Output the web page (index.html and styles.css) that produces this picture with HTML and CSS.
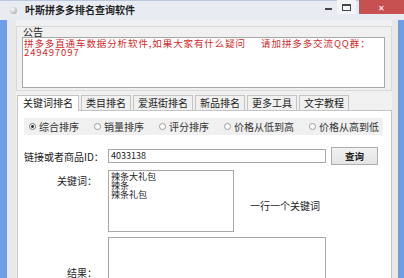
FILE: index.html
```html
<!DOCTYPE html>
<html lang="zh-CN">
<head>
    <meta charset="UTF-8">
    <title>叶斯拼多多排名查询软件</title>
    <link rel="stylesheet" href="styles.css">
</head>
<body>
    <div class="window">
        <div class="titlebar">
            <span class="app-icon"></span>
            <span class="title">叶斯拼多多排名查询软件</span>
            <div class="controls">
                <span class="ctl ctl-min"><i></i></span>
                <span class="ctl ctl-max"><i></i></span>
                <span class="ctl ctl-close">✕</span>
            </div>
        </div>

        <div class="frame">
            <div class="client">
                <!-- notice group -->
                <div class="group">
                    <div class="group-title">公告</div>
                    <div class="notice-box">
                        <div class="notice-line">拼多多直通车数据分析软件,如果大家有什么疑问&nbsp;&nbsp;&nbsp;&nbsp;&nbsp;请加拼多多交流QQ群：</div>
                        <div class="notice-line">249497097</div>
                    </div>
                </div>

                <div class="tabs">
                    <span class="tab active">关键词排名</span>
                    <span class="tab">类目排名</span>
                    <span class="tab">爱逛街排名</span>
                    <span class="tab">新品排名</span>
                    <span class="tab">更多工具</span>
                    <span class="tab">文字教程</span>
                </div>

                <div class="panel">
                    <div class="sort-row">
                        <label class="radio checked"><span class="dot"></span>综合排序</label>
                        <label class="radio"><span class="dot"></span>销量排序</label>
                        <label class="radio"><span class="dot"></span>评分排序</label>
                        <label class="radio"><span class="dot"></span>价格从低到高</label>
                        <label class="radio"><span class="dot"></span>价格从高到低</label>
                    </div>

                    <div class="query-row">
                        <span class="query-label">链接或者商品ID：</span>
                        <div class="input">4033138</div>
                        <span class="btn">查询</span>
                    </div>

                    <div class="kw-row">
                        <span class="field-label">关键词：</span>
                        <div class="kw-box">
                            <div class="kw-line">辣条大礼包</div>
                            <div class="kw-line">辣条</div>
                            <div class="kw-line">辣条礼包</div>
                        </div>
                        <span class="hint">一行一个关键词</span>
                    </div>

                    <div class="result-row">
                        <span class="field-label result-label">结果：</span>
                        <div class="result-box"></div>
                    </div>
                </div>
            </div>
        </div>
    </div>
</body>
</html>
```

FILE: styles.css
```css
body {
    margin: 0;
    width: 404px;
    height: 278px;
    overflow: hidden;
    font-family: "Noto Sans CJK SC", "Liberation Sans", sans-serif;
    font-size: 10px;
    color: #222;
    background: #6f9ee6;
}

.window {
    display: flex;
    flex-direction: column;
    height: 278px;
}

/* title bar */
.titlebar {
    height: 20px;
    flex: none;
    display: flex;
    align-items: flex-start;
    background: #e8ecf2;
    border-top: 1px solid #b9c8de;
    box-sizing: border-box;
}

.app-icon {
    width: 7px;
    height: 7px;
    margin: 6px 0 0 10px;
    border-radius: 50%;
    background: radial-gradient(circle at 35% 35%, #ffffff, #b8b8b8 70%, #8a8a8a);
}

.title {
    margin: 3px 0 0 8px;
    font-weight: bold;
    font-size: 10px;
    line-height: 12px;
    color: #1f1f1f;
}

.controls {
    margin-left: auto;
    display: flex;
    align-items: flex-start;
}

.ctl {
    display: flex;
    align-items: center;
    justify-content: center;
    height: 14px;
    margin-top: -1px;
}

.ctl-min {
    width: 18px;
}

.ctl-min i {
    width: 7px;
    height: 2px;
    margin-top: 3px;
    background: #444;
}

.ctl-max {
    width: 19px;
    margin-right: 3px;
    background: #f2f4f7;
}

.ctl-max i {
    width: 7px;
    height: 4px;
    border: 1px solid #444;
    border-top-width: 2px;
}

.ctl-close {
    width: 45px;
    background: #c75050;
    color: #fff;
    font-size: 8px;
}

/* frame */
.frame {
    flex: 1;
    display: flex;
    border-left: 7px solid #6f9ee6;
    border-right: 6px solid #6f9ee6;
    background: #e9e9e9;
    padding: 0 6px 0 9px;
    min-height: 0;
}

.client {
    flex: 1;
    display: flex;
    flex-direction: column;
    background: #f0f0f0;
    padding-top: 6px;
    min-width: 0;
    min-height: 0;
}

.group {
    border: 1px solid #d9d9d9;
    padding: 0 6px 2px 5px;
}

.group-title {
    line-height: 10px;
    height: 10px;
    padding-left: 1px;
    color: #222;
}

.notice-box {
    height: 47px;
    background: #fff;
    border: 1px solid #a8a8a8;
    padding: 1px 1px;
    color: #d42a2a;
    font-size: 9.5px;
    letter-spacing: 0.9px;
    white-space: nowrap;
    overflow: hidden;
}

.notice-line {
    height: 9px;
    line-height: 9px;
}

/* tabs */
.tabs {
    display: flex;
    align-items: flex-end;
    margin: 4px 0 0 1px;
    height: 15px;
}

.tab {
    height: 14px;
    line-height: 14px;
    padding: 0 4px;
    margin-right: 2px;
    border: 1px solid #c4c4c4;
    border-bottom: none;
    background: #f0f0f0;
}

.tab.active {
    height: 15px;
    padding: 0 5px;
    background: #fff;
    margin-bottom: -1px;
    position: relative;
    z-index: 1;
}

.panel {
    flex: 1;
    background: #fff;
    border: 1px solid #c4c4c4;
    border-bottom: none;
    margin-left: 1px;
    padding: 7px 7px 0 6px;
    overflow: hidden;
}

.sort-row {
    display: flex;
    align-items: center;
    gap: 15px;
    height: 17px;
    background: #f0f0f0;
    padding-left: 5px;
    margin-right: 1px;
    font-size: 10px;
}

.radio {
    display: flex;
    align-items: center;
    gap: 3px;
    color: #333;
}

.dot {
    width: 7px;
    height: 7px;
    border: 1px solid #9a9a9a;
    border-radius: 50%;
    background: #fff;
    box-sizing: border-box;
}

.radio.checked .dot {
    border-color: #777;
    background: radial-gradient(circle, #333 35%, #fff 45%);
}

.query-row {
    display: flex;
    align-items: center;
    margin-top: 12px;
    height: 18px;
}

.query-label {
    width: 84px;
    flex: none;
}

.input {
    width: 218px;
    height: 14px;
    border: 1px solid #a8a8a8;
    box-sizing: border-box;
    line-height: 12px;
    padding-left: 2px;
    font-size: 9px;
}

.btn {
    width: 47px;
    height: 18px;
    margin-left: 5px;
    border: 1px solid #adadad;
    box-sizing: border-box;
    background: linear-gradient(#f2f2f2, #e4e4e4);
    display: flex;
    align-items: center;
    justify-content: center;
    font-weight: bold;
    font-size: 9.5px;
}

.kw-row {
    display: flex;
    margin-top: 5px;
}

.field-label {
    width: 73px;
    flex: none;
    text-align: right;
    padding-right: 11px;
    margin-top: 3px;
}

.kw-box {
    width: 126px;
    height: 62px;
    border: 1px solid #a8a8a8;
    box-sizing: border-box;
    padding: 1px 2px;
    font-size: 9px;
}

.kw-line {
    height: 9px;
    line-height: 9px;
}

.hint {
    margin: 28px 0 0 16px;
}

.result-row {
    display: flex;
    margin-top: 5px;
}

.result-label {
    margin-top: 28px;
}

.result-box {
    width: 218px;
    height: 46px;
    border: 1px solid #a8a8a8;
    border-bottom: none;
    box-sizing: border-box;
}
```
